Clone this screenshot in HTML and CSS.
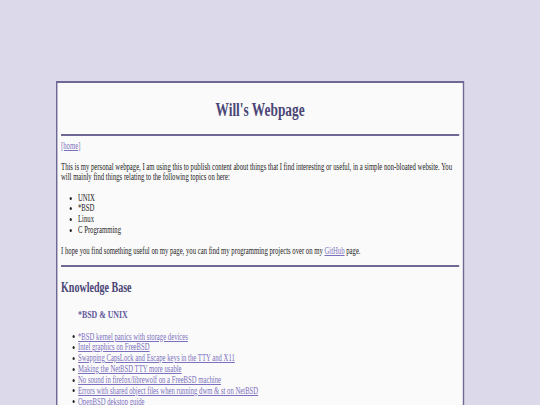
FILE: index.html
```html
<!DOCTYPE html>
<html lang="en">
<head>
<meta charset="utf-8">
<title>Will's Webpage</title>
<link rel="stylesheet" href="styles.css">
</head>
<body>
<div class="frame">
  <h1 class="title">Will's Webpage</h1>
  <hr class="rule rule-top">
  <p class="nav"><a href="#">[home]</a></p>
  <p class="intro">This is my personal webpage, I am using this to publish content about things that I find interesting or useful, in a simple non-bloated website. You will mainly find things relating to the following topics on here:</p>
  <ul class="topics">
    <li>UNIX</li>
    <li>*BSD</li>
    <li>Linux</li>
    <li>C Programming</li>
  </ul>
  <p class="outro">I hope you find something useful on my page, you can find my programming projects over on my <a href="#">GitHub</a> page.</p>
  <hr class="rule rule-mid">
  <h2 class="section">Knowledge Base</h2>
  <h3 class="subsection">*BSD &amp; UNIX</h3>
  <ul class="articles">
    <li><a href="#">*BSD kernel panics with storage devices</a></li>
    <li><a href="#">Intel graphics on FreeBSD</a></li>
    <li><a href="#">Swapping CapsLock and Escape keys in the TTY and X11</a></li>
    <li><a href="#">Making the NetBSD TTY more usable</a></li>
    <li><a href="#">No sound in firefox/librewolf on a FreeBSD machine</a></li>
    <li><a href="#">Errors with shared object files when running dwm &amp; st on NetBSD</a></li>
    <li><a href="#">OpenBSD dekstop guide</a></li>
  </ul>
</div>
</body>
</html>
```
FILE: styles.css
```css
html, body {
  margin: 0;
  padding: 0;
  overflow: hidden;
  background: #dcd9eb;
}

body {
  font-family: "Liberation Serif", "Times New Roman", serif;
  font-size: 9.3px;
  line-height: 10.7px;
  color: #222222;
}

.frame {
  box-sizing: border-box;
  width: 567px;
  min-height: 400px;
  margin: 81px 0 0 56px;
  padding: 17px 5px 0 5px;
  background: #fafafa;
  border: 2px solid #6e6894;
  transform: scaleX(0.72);
  transform-origin: 0 0;
}

a {
  color: #7a70bd;
  text-decoration: underline;
}

.title {
  margin: 0;
  font-size: 18.6px;
  line-height: 20px;
  font-weight: bold;
  text-align: center;
  color: #4a4676;
}

.rule {
  border: 0;
  height: 2px;
  margin: 0;
  background: #6e6894;
}

.rule-top {
  margin-top: 14px;
}

.nav {
  margin: 4.7px 0 0;
}

.intro {
  margin: 10.2px 0 0;
}

.topics {
  margin: 9.7px 0 0;
  padding-left: 23.6px;
}

.outro {
  margin: 10.1px 0 0;
}

.rule-mid {
  margin-top: 8.7px;
}

.section {
  margin: 13px 0 0;
  font-size: 13.95px;
  line-height: 16px;
  font-weight: bold;
  color: #4a4676;
}

.subsection {
  margin: 11.75px 0 0 23.6px;
  font-size: 10.9px;
  line-height: 12.5px;
  font-weight: bold;
  color: #5f579c;
}

.articles {
  margin: 11.4px 0 0;
  padding-left: 23.6px;
  list-style: none;
}

.articles li {
  line-height: 10.85px;
}

.articles li::before {
  content: "";
  display: inline-block;
  width: 3px;
  height: 3px;
  margin: 0 5px 1.5px -8px;
  border-radius: 50%;
  background: #222222;
  vertical-align: middle;
}
```
